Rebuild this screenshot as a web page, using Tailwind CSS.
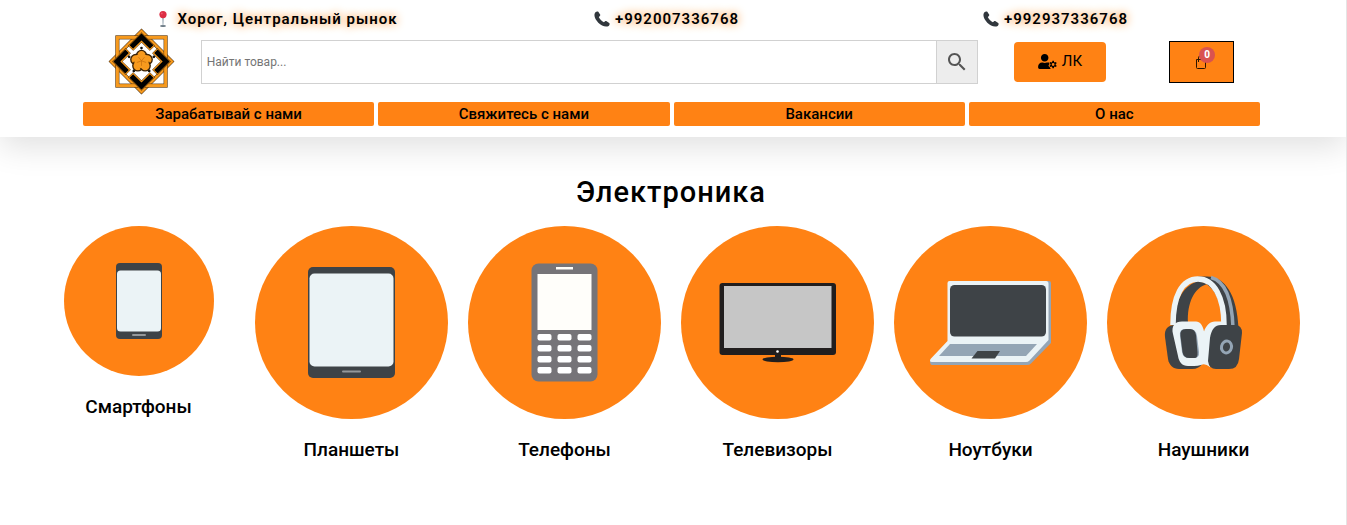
<!DOCTYPE html>
<html lang="ru">
<head>
<meta charset="utf-8">
<meta name="viewport" content="width=device-width, initial-scale=1">
<title>Электроника</title>
<script src="https://cdn.jsdelivr.net/npm/@tailwindcss/browser@4"></script>
</head>
<body class="min-h-screen overflow-x-hidden border-r border-neutral-200 bg-white font-[Roboto,sans-serif] text-black">
<header class="bg-white pt-[9px] pb-[11px] pr-[86px] pl-[83px] shadow-[0_10px_30px_rgba(0,0,0,0.12)]">
  <div class="grid h-[19px] grid-cols-3 items-center pr-2.5 text-[15px] leading-5 font-semibold tracking-[1px]">
    <p class="flex items-center justify-center gap-2">
      <svg class="h-4 w-3" viewBox="0 0 12 16" aria-hidden="true"><ellipse cx="6" cy="15" rx="3" ry="1" fill="#66757f"/><path d="M5.3 6h1.4L6.3 15h-.6z" fill="#8899a6"/><circle cx="6" cy="3.6" r="3.6" fill="#dd2e44"/><circle cx="4.8" cy="2.5" r=".9" fill="#ea596e"/></svg>
      <span class="[text-shadow:0_0_10px_#ff8214]">Хорог, Центральный рынок</span>
    </p>
    <a href="tel:+992007336768" class="flex items-center justify-center gap-[5px]">
      <svg class="size-4" viewBox="0 0 16 16" aria-hidden="true"><path d="M1.2 1.4C2.3.4 3.6.1 4.3.8l1.8 2.6c.4.7.2 1.3-.4 1.8l-.9.8c.9 2 2.9 4.200 5.100 5.300l.9-.8c.6-.5 1.200-.6 1.800-.2l2.600 1.700c.8.7.5 1.900-.5 2.900C8.500 18.400-2.600 6.800 1.200 1.400z" fill="#31373d"/></svg>
      <span class="[text-shadow:0_0_10px_#ff8214]">+992007336768</span>
    </a>
    <a href="tel:+992937336768" class="flex items-center justify-center gap-[5px]">
      <svg class="size-4" viewBox="0 0 16 16" aria-hidden="true"><path d="M1.2 1.4C2.3.4 3.6.1 4.3.8l1.8 2.6c.4.7.2 1.3-.4 1.8l-.9.8c.9 2 2.9 4.200 5.100 5.300l.9-.8c.6-.5 1.200-.6 1.800-.2l2.600 1.700c.8.7.5 1.900-.5 2.900C8.500 18.400-2.600 6.800 1.200 1.400z" fill="#31373d"/></svg>
      <span class="[text-shadow:0_0_10px_#ff8214]">+992937336768</span>
    </a>
  </div>

  <div class="grid grid-cols-[10fr_66fr_14fr_10fr] items-center">
    <a href="#" class="flex justify-center" aria-label="На главную">
      <svg class="size-[67px]" viewBox="0 0 200 200" aria-hidden="true">
        <g transform="translate(100 100)" fill="none">
          <g transform="rotate(45)">
            <rect x="-64" y="-64" width="128" height="128" stroke="#4a2b08" stroke-width="11"/>
            <rect x="-64" y="-64" width="128" height="128" stroke="#f79a1e" stroke-width="8"/>
          </g>
          <rect x="-72" y="-72" width="144" height="144" stroke="#4a2b08" stroke-width="12"/>
          <rect x="-72" y="-72" width="144" height="144" stroke="#f79a1e" stroke-width="9"/>
          <g transform="rotate(45)">
            <g stroke="#4a2b08" stroke-width="22"><path d="M-51-5V-51H-5M5-51H51V-5M51 5V51H5M-5 51H-51V5"/></g>
            <g stroke="#f79a1e" stroke-width="20"><path d="M-51-6V-51H-6M6-51H51V-6M51 6V51H6M-6 51H-51V6"/></g>
            <g stroke="#000" stroke-width="15"><path d="M-52-9V-52H-9M9-52H52V-9M52 9V52H9M-9 52H-52V9"/></g>
          </g>
          <g fill="#111"><circle cy="-40" r="4"/><circle cx="-37" cy="-14" r="4"/><circle cx="37" cy="-14" r="4"/><circle cx="-23" cy="28" r="4"/><circle cx="23" cy="28" r="4"/></g>
          <g fill="#f79a1e" stroke="#3a2206" stroke-width="4"><circle cy="-18" r="15"/><circle cx="-17" cy="-6" r="15"/><circle cx="17" cy="-6" r="15"/><circle cx="-11" cy="13" r="15"/><circle cx="11" cy="13" r="15"/></g>
          <circle cy="-2" r="22" fill="#f79a1e"/>
          <path d="M0-2L-9-13M0-2L9-13M0-2L-14 3M0-2L14 3M0-2V13" stroke="#c46c0c" stroke-width="2"/>
        </g>
      </svg>
    </a>
    <form class="flex h-11 border border-[#d1d1d1]" role="search">
      <input type="search" aria-label="Поиск" placeholder="Найти товар..." class="min-w-0 flex-1 px-[5px] text-xs placeholder:text-[#757575] focus:outline-none">
      <button type="button" aria-label="Найти" class="flex w-[41px] items-center justify-center border-l border-[#d1d1d1] bg-[#ededed]">
        <svg class="size-6" viewBox="0 0 24 24" fill="#555" aria-hidden="true"><path d="M15.500 14h-.79l-.28-.27C15.410 12.590 16 11.110 16 9.500 16 5.910 13.090 3 9.500 3S3 5.910 3 9.500 5.910 16 9.500 16c1.610 0 3.090-.59 4.230-1.570l.27.28v.79l5 4.990L20.490 19l-4.990-5zm-6 0C7.010 14 5 11.990 5 9.500S7.010 5 9.500 5 14 7.010 14 9.500 11.990 14 9.500 14z"/></svg>
      </button>
    </form>
    <div class="flex justify-center">
      <a href="#" class="flex h-10 w-[92px] items-center justify-center gap-[5px] rounded bg-[#ff8214] text-[15px]">
        <svg class="h-[15px] w-[19px]" viewBox="0 0 640 512" aria-hidden="true"><path d="M224 256c70.700 0 128-57.300 128-128S294.700 0 224 0 96 57.300 96 128s57.300 128 128 128zm200 240c-30-17-25-44-24-50-24-16-34-22-50-44l32-44c-6-22-5-50 1-66-20-5-45-4-69-4h-16.700c-46 21-100 21-146.600 0H134.400C60.200 288 0 348.200 0 422.400V464c0 26.500 21.500 48 48 48h376z"/><path fill-rule="evenodd" d="M488 230h48l8 43 25 14 41-14 24 42-33 28v29l33 28-24 42-41-14-25 14-8 44h-48l-8-44-25-14-41 14-24-42 33-28v-29l-33-28 24-42 41 14 25-14zm24 80a48 48 0 1 0 0 96 48 48 0 0 0 0-96z"/></svg>
        <span>ЛК</span>
      </a>
    </div>
    <div class="flex justify-center">
      <a href="#" aria-label="Корзина, товаров: 0" class="flex h-[42px] w-[65px] items-center justify-center border border-black bg-[#ff8214]">
        <span class="relative block">
          <svg class="h-4 w-3" viewBox="0 0 12 16" fill="none" stroke="#2b1400" aria-hidden="true"><path d="M1.500 5.500h9v8q0 1-1 1h-7q-1 0-1-1zM3.500 8V4q0-2.500 2.500-2.500T8.500 4v4"/></svg>
          <span class="absolute -top-[7px] -right-2 flex size-4 items-center justify-center rounded-full bg-[#d9534f] text-[10px] leading-none font-extrabold text-white">0</span>
        </span>
      </a>
    </div>
  </div>

  <nav class="mt-[7px] grid grid-cols-4 gap-1 text-center text-[15px] leading-6 font-medium">
    <a href="#" class="rounded-xs bg-[#ff8214]">Зарабатывай с нами</a>
    <a href="#" class="rounded-xs bg-[#ff8214]">Свяжитесь с нами</a>
    <a href="#" class="rounded-xs bg-[#ff8214]">Вакансии</a>
    <a href="#" class="rounded-xs bg-[#ff8214]">О нас</a>
  </nav>
</header>

<main class="pt-[37px] pr-[46px] pb-6 pl-[42px]">
  <h1 class="text-center text-[29px] leading-9 font-medium tracking-[1px]">Электроника</h1>
  <div class="mt-4 grid grid-cols-6 gap-5 text-center text-[19px] leading-6 font-medium">
    <a href="#" class="flex flex-col items-center gap-[19px]">
      <svg class="w-[150px]" viewBox="0 0 150 150" aria-hidden="true"><circle cx="75" cy="75" r="75" fill="#ff8214"/><rect x="52" y="37" width="46" height="76" rx="4" fill="#3e4347"/><rect x="53" y="44.500" width="44" height="61" rx="3.500" fill="#ebf3f6"/><rect x="68" y="108" width="14" height="2" rx="1" fill="#94989b"/></svg>
      <span>Смартфоны</span>
    </a>
    <a href="#" class="flex flex-col items-center gap-[19px]">
      <svg class="w-full" viewBox="0 0 193 193" aria-hidden="true"><circle cx="96.500" cy="96.500" r="96.500" fill="#ff8214"/><rect x="53" y="41" width="87" height="111" rx="5" fill="#3e4347"/><rect x="54.500" y="47.500" width="84" height="93" rx="5" fill="#ebf3f6"/><rect x="87" y="144.500" width="19" height="2" rx="1" fill="#94989b"/></svg>
      <span>Планшеты</span>
    </a>
    <a href="#" class="flex flex-col items-center gap-[19px]">
      <svg class="w-full" viewBox="0 0 193 193" aria-hidden="true"><circle cx="96.500" cy="96.500" r="96.500" fill="#ff8214"/><rect x="63.500" y="37.500" width="66" height="118" rx="7" fill="#767478"/><path d="M88 41h17v2.500H88zM69.500 48h54v56h-54z" fill="#fffefa"/><g fill="#fff"><rect x="69.500" y="108" width="14" height="6.500" rx="2"/><rect x="89.500" y="108" width="14" height="6.500" rx="2"/><rect x="109.500" y="108" width="14" height="6.500" rx="2"/><rect x="69.500" y="119" width="14" height="6.500" rx="2"/><rect x="89.500" y="119" width="14" height="6.500" rx="2"/><rect x="109.500" y="119" width="14" height="6.500" rx="2"/><rect x="69.500" y="130" width="14" height="6.500" rx="2"/><rect x="89.500" y="130" width="14" height="6.500" rx="2"/><rect x="109.500" y="130" width="14" height="6.500" rx="2"/><rect x="69.500" y="141" width="14" height="6.500" rx="2"/><rect x="89.500" y="141" width="14" height="6.500" rx="2"/><rect x="109.500" y="141" width="14" height="6.500" rx="2"/></g></svg>
      <span>Телефоны</span>
    </a>
    <a href="#" class="flex flex-col items-center gap-[19px]">
      <svg class="w-full" viewBox="0 0 193 193" aria-hidden="true"><circle cx="96.500" cy="96.500" r="96.500" fill="#ff8214"/><rect x="38.500" y="57" width="116.500" height="72" rx="3" fill="#211e1e"/><path d="M43 60h107.500v62H43z" fill="#c6c6c6"/><path d="M94 128h6v5h-6z" fill="#211e1e"/><ellipse cx="97" cy="133.500" rx="15.500" ry="2.700" fill="#211e1e"/><circle cx="96.500" cy="125.500" r="1.300" fill="#fff"/></svg>
      <span>Телевизоры</span>
    </a>
    <a href="#" class="flex flex-col items-center gap-[19px]">
      <svg class="w-full" viewBox="0 0 193 193" aria-hidden="true"><circle cx="96.500" cy="96.500" r="96.500" fill="#ff8214"/><path d="M56 55h99q2 0 2 2v60l-20 20.500q-1.500 1.500-4 1.500H38q-2 0-2-4l20-19z" fill="#94a5b5"/><path d="M55.500 55H152q2.500 0 2.500 2.500V114l-19 20.500q-1.500 1.500-3.500 1.500H38q-3 0-1.500-3L53.500 115V57q0-2 2-2z" fill="#ebf3f6"/><rect x="56" y="59" width="96" height="51.500" rx="4.500" fill="#3e4347"/><path d="M56 118h87l-11 12H45z" fill="#94a5b5"/><path d="M83.500 125h22.500l-5 7.500H77.500z" fill="#3e4347"/></svg>
      <span>Ноутбуки</span>
    </a>
    <a href="#" class="flex flex-col items-center gap-[19px]">
      <svg class="w-full" viewBox="0 0 193 193" aria-hidden="true"><circle cx="96.500" cy="96.500" r="96.500" fill="#ff8214"/><g fill="none"><path d="M91 50.500h9c18 0 30 18 31.500 52l-15 2C116 77 108 58 90 54z" fill="#3e4347"/><path d="M104 51.500c15 4 21 22 22 50" stroke="#94a5b5" stroke-width="3.500"/><path d="M68 97c0-24 9-38 24-42q6 2 8 3c-13 4-20 19-19 39z" fill="#3e4347"/><path d="M66 99c0-29 9-46 25-46s26 18 26 46" stroke="#ebf3f6" stroke-width="5.500"/></g><path d="M68 99c-7 0-11 4-10 12l3 22c1 6 5 10 11 10h13q7 0 11-6z" fill="#3e4347"/><path d="M75 95.500h14c4 0 7 4 8 10 2-6 6-10 11-10h9v8L103 141q-5-4-9-2-3 1-7 1h-6c-6 0-9-4-10-10l-5-22c-2-8 2-12.500 9-12.500z" fill="#ebf3f6"/><path d="M78 103h5q6 0 7 7l2 16q.5 6-5 6h-5q-6 0-7-6l-2-16q-1-7 5-7z" fill="#94a5b5"/><path d="M79 103h4q5 0 6 6l1.500 17q.5 6-3 6h-5q-6 0-7-6l-2-16q-1-7 5.500-7z" fill="#3e4347"/><path d="M114 99h14q7 0 7 8l-3 26q-1 10-10 10h-13q-7 0-8-8l2-23q2-13 11-13z" fill="#3e4347"/><ellipse cx="119.500" cy="121" rx="5" ry="6" fill="none" stroke="#94a5b5" stroke-width="3" transform="rotate(12 119.500 121)"/></svg>
      <span>Наушники</span>
    </a>
  </div>
</main>
</body>
</html>
